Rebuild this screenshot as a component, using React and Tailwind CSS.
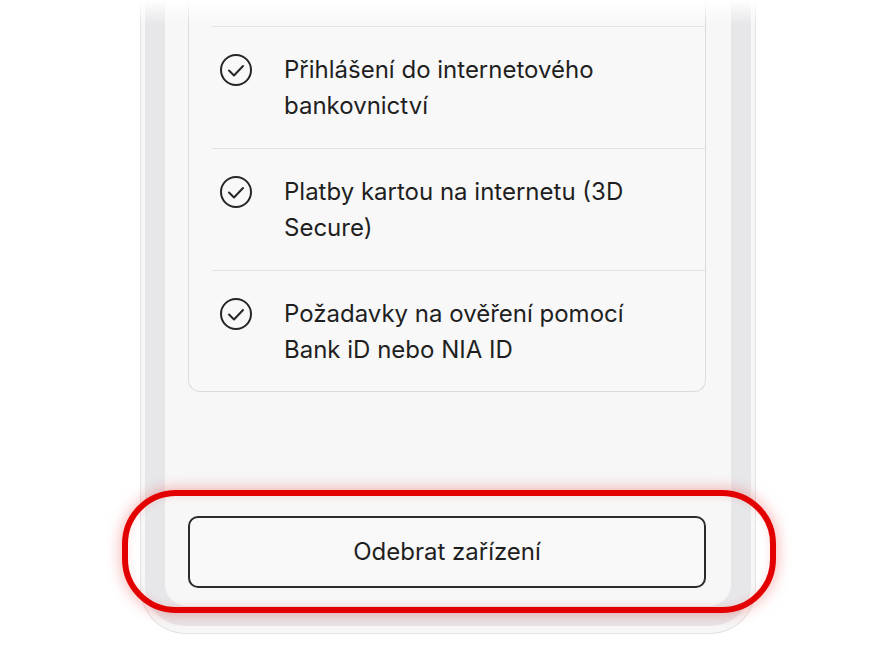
import React from 'react';

const items = [
    ['Přihlášení do internetového', 'bankovnictví'],
    ['Platby kartou na internetu (3D', 'Secure)'],
    ['Požadavky na ověření pomocí', 'Bank iD nebo NIA ID'],
];

function CheckCircle() {
    return (
        <svg width="32" height="32" viewBox="0 0 32 32" fill="none" stroke="#262626" strokeWidth="2" strokeLinecap="round" strokeLinejoin="round">
            <circle cx="16" cy="16" r="15" />
            <path d="M9 16.5 L14 21.5 L23 12" />
        </svg>
    );
}

export default function App() {
    return (
        <div className="relative h-[672px] w-[896px] overflow-hidden bg-white" style={{ fontFamily: 'Inter, "Noto Sans", sans-serif' }}>
            {/* phone frame */}
            <div className="mx-auto w-[616px] rounded-b-[46px] border-x border-b border-[#e3e3e3] bg-[#f7f7f7] px-[4px] pb-[7px]">
                <div className="rounded-b-[40px] bg-[#e7e7ea] px-[20px] pb-[20px]">
                    <div className="flex flex-col rounded-b-[22px] bg-[#f7f7f7] pl-[23px] pr-[25px] pb-[18px]">
                        <div className="rounded-b-[12px] border-x border-b border-[#dcdcdc] bg-[#f8f8f8] pl-[23px]">
                            <div className="h-[27px] border-b border-[#e2e2e2]" />
                            {items.map((lines, i) => (
                                <div
                                    key={i}
                                    className={
                                        i < items.length - 1
                                            ? 'flex gap-6 border-b border-[#e2e2e2] pt-[25px] pb-[24px]'
                                            : 'flex gap-6 pt-[25px] pb-[23px]'
                                    }
                                >
                                    <div className="flex h-9 w-12 shrink-0 items-center justify-center">
                                        <CheckCircle />
                                    </div>
                                    <div className="text-[24px] leading-[36px] text-[#1f1f1f]">
                                        <div>{lines[0]}</div>
                                        <div>{lines[1]}</div>
                                    </div>
                                </div>
                            ))}
                        </div>

                        <button className="mt-[124px] flex h-[72px] items-center justify-center rounded-[10px] border-2 border-[#2b2b2b] bg-[#f9f9f9] text-[24px] text-[#1f1f1f]">
                            Odebrat zařízení
                        </button>
                    </div>
                </div>
            </div>

            {/* top fade */}
            <div className="pointer-events-none absolute inset-x-0 top-0 h-[24px] bg-gradient-to-b from-white to-white/0" />

            {/* highlight ring */}
            <div className="pointer-events-none absolute left-[122px] top-[490px] h-[123px] w-[654px] rounded-[54px] border-[6px] border-[#e30000] shadow-[0_0_16px_rgba(230,0,0,0.35),inset_0_0_10px_rgba(230,0,0,0.12)]" />
        </div>
    );
}
